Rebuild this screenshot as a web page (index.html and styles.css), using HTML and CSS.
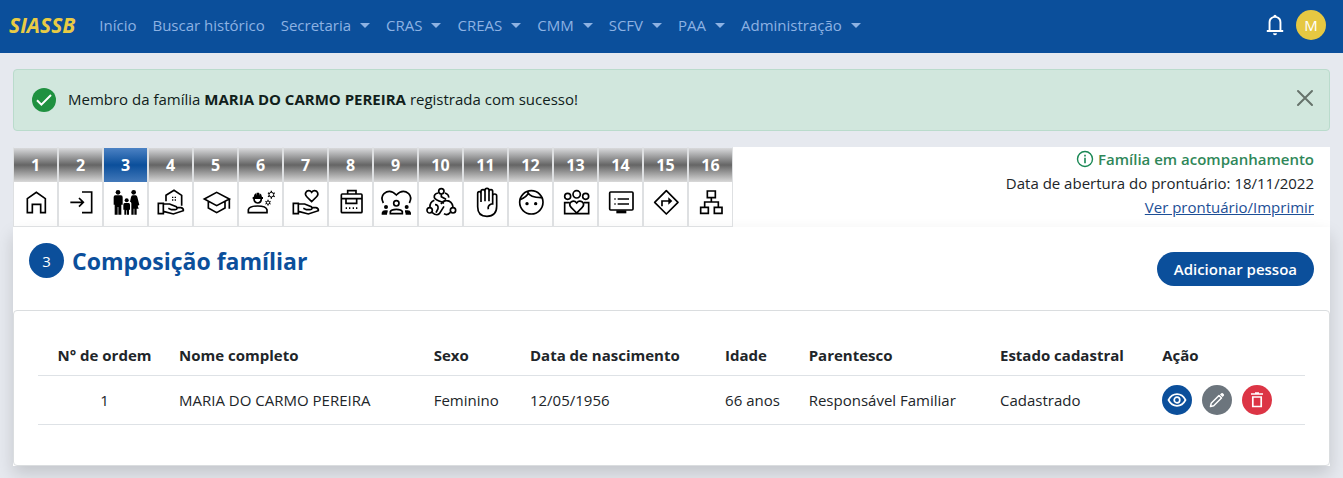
FILE: index.html
```html
<!DOCTYPE html>
<html lang="pt-BR">
<head>
<meta charset="utf-8">
<meta name="viewport" content="width=device-width, initial-scale=1">
<title>SIASSB - Composição famíliar</title>
<link rel="stylesheet" href="styles.css">
</head>
<body>
<header class="navbar">
  <a class="brand" href="#">SIASSB</a>
  <nav class="menu">
    <a class="menu-link" href="#">Início</a>
    <a class="menu-link" href="#">Buscar histórico</a>
    <button class="menu-link dropdown" type="button">Secretaria</button>
    <button class="menu-link dropdown" type="button">CRAS</button>
    <button class="menu-link dropdown" type="button">CREAS</button>
    <button class="menu-link dropdown" type="button">CMM</button>
    <button class="menu-link dropdown" type="button">SCFV</button>
    <button class="menu-link dropdown" type="button">PAA</button>
    <button class="menu-link dropdown" type="button">Administração</button>
  </nav>
  <button class="bell" type="button" aria-label="Notificações">
    <svg width="24" height="24" viewBox="0 0 24 24" fill="#fff"><path d="M12 1.700a1.600 1.600 0 0 1 1.600 1.500A6.200 6.200 0 0 1 18.400 9.300V17h1.800v1.900H3.800V17h1.800V9.300A6.200 6.200 0 0 1 10.400 3.200 1.600 1.600 0 0 1 12 1.700zM12 4.700a4.500 4.500 0 0 0-4.500 4.500V17h9V9.200A4.500 4.500 0 0 0 12 4.700zM10 20.200h4a2 2 0 0 1-4 0z"/></svg>
  </button>
  <button class="avatar" type="button">M</button>
</header>

<main class="page">
  <div class="alert" role="alert">
    <svg class="alert-icon" width="24" height="24" viewBox="0 0 24 24"><circle cx="12" cy="12" r="12" fill="#1f9140"/><path d="M5 12.300l4.400 4.400L19 7" fill="none" stroke="#fff" stroke-width="2"/></svg>
    <p class="alert-text">Membro da família <strong>MARIA DO CARMO PEREIRA</strong> registrada com sucesso!</p>
    <button class="close" type="button" aria-label="Fechar">
      <svg width="18" height="18" viewBox="0 0 18 18"><path d="M2 2l14 14M16 2L2 16" stroke="#66736b" stroke-width="2" stroke-linecap="round"/></svg>
    </button>
  </div>

  <section class="top">
    <nav class="steps" aria-label="Etapas">
      <a class="step" href="#"><span class="step-number">1</span><span class="step-icon"><svg viewBox="0 0 90 90"><path d="M19 74V32L46 13l27 19v42H59V49H34v25z"/></svg></span></a>
      <a class="step" href="#"><span class="step-number">2</span><span class="step-icon"><svg viewBox="0 0 90 90"><path d="M48 12h29v62H48M13 43h38M39 30l13 13-13 13"/></svg></span></a>
      <a class="step active" href="#"><span class="step-number">3</span><span class="step-icon"><svg viewBox="0 0 90 90"><g class="solid"><circle cx="21" cy="13" r="7"/><circle cx="68" cy="13" r="7"/><circle cx="47" cy="37" r="6"/><path d="M13 22h17q5 0 5 6v22h-4v30h-9V57h-2v23h-9V50H8V28q0-6 5-6zM41 45h12q4 0 4 5v15h-3v15h-6V67h-2v13h-6V65h-3V50q0-5 4-5zM62 22h12q4 0 5 5l6 24-5 2 3 9h-6v18h-7V62h-2v18h-7V46q0-4-4-5l3-13q1-6 5-6z"/></g></svg></span></a>
      <a class="step" href="#"><span class="step-number">4</span><span class="step-icon"><svg viewBox="0 0 90 90"><path d="M7 46h15v31H7zM22 48h19l20 8q6 8-4 9H46l-9-4M61 59h14q8 2 7 9L52 78l-30-8M30 40V22L54 7l23 15v31"/><path class="solid" d="M48 26h4v4h-4zM56 26h4v4h-4zM48 34h4v4h-4zM56 34h4v4h-4z"/></svg></span></a>
      <a class="step" href="#"><span class="step-number">5</span><span class="step-icon"><svg viewBox="0 0 90 90"><path d="M10 33l37-20 38 20-38 20zM22 40v20l25 14 25-14V40M85 33v29"/></svg></span></a>
      <a class="step" href="#"><span class="step-number">6</span><span class="step-icon"><svg viewBox="0 0 90 90"><path d="M7 74V65q3-11 28-11t28 11v9z"/><path d="M24 31q0 14 11 14t11-14"/><path class="solid" d="M20 27h3q1-9 7-11v7l2-9h7l2 9v-7q6 2 7 11h3v6H20z"/><circle cx="76" cy="20" r="7" stroke-width="3"/><path d="M76 8v5M76 27v5M66 14l4 3M82 23l4 3M86 14l-4 3M70 23l-4 3" stroke-width="4"/><circle cx="66" cy="44" r="5" stroke-width="3"/><path d="M66 35v4M66 49v4M58 40l4 2M70 46l4 2M74 40l-4 2M62 46l-4 2" stroke-width="3"/></svg></span></a>
      <a class="step" href="#"><span class="step-number">7</span><span class="step-icon"><svg viewBox="0 0 90 90"><path d="M7 46h15v31H7zM22 48h19l20 8q6 8-4 9H46l-9-4M61 59h14q8 2 7 9L52 78l-30-8M62 41L48 27q-9-9-1-17 9-5 15 3 6-8 15-3 8 8-1 17z"/></svg></span></a>
      <a class="step" href="#"><span class="step-number">8</span><span class="step-icon"><svg viewBox="0 0 90 90"><rect x="16" y="18" width="62" height="56" rx="3"/><path d="M35 18V8h25v10M16 32h62M30 32v14h32V32"/><path class="solid" d="M29 58h4v5h-4zM39 58h4v5h-4zM50 58h4v5h-4zM60 58h4v5h-4z"/></svg></span></a>
      <a class="step" href="#"><span class="step-number">9</span><span class="step-icon"><svg viewBox="0 0 90 90"><path d="M7 45Q-2 28 9 17 27 2 46 21 65 2 83 17q11 11 2 28"/><circle cx="46" cy="46" r="8"/><path d="M28 77v-6q3-7 18-7t18 7v6z"/><g class="solid"><circle cx="15" cy="57" r="6"/><circle cx="77" cy="57" r="6"/><path d="M2 80v-6q2-7 10-7h8v5q-2 2-2 8zM90 80v-6q-2-7-10-7h-8v5q2 2 2 8z"/></g></svg></span></a>
      <a class="step" href="#"><span class="step-number">10</span><span class="step-icon"><svg viewBox="0 0 90 90"><circle cx="46" cy="10" r="8"/><circle cx="11" cy="67" r="8"/><circle cx="81" cy="67" r="8"/><path d="M36 15q-13 3-11 14 3 7 23 13l6 4M46 18v8l14 8M57 15q12 4 11 14M12 57q-1-14 13-20M27 50q11 0 9 12l-6 12M18 73q14 12 22 4l14-22M45 48q6-11 17-10 16 1 19 19M73 73q-10 11-19 4"/></svg></span></a>
      <a class="step" href="#"><span class="step-number">11</span><span class="step-icon"><svg viewBox="0 0 90 90"><path d="M30 42V17q0-6-5-6t-5 6v39q0 29 28 29 29 0 29-30V24q0-6-6-6t-6 6v24h-4q-12 5-9 16M30 42V11q0-6 6-6t6 6v29M42 40V7q0-6 6-6t6 6v33M54 40V11q0-6 6-6 5 0 5 6v37"/></svg></span></a>
      <a class="step" href="#"><span class="step-number">12</span><span class="step-icon"><svg viewBox="0 0 90 90"><circle cx="46" cy="43" r="35"/><path d="M34 11q8 19 45 18M12 35Q32 28 38 14"/><g class="solid"><circle cx="33" cy="47" r="5"/><circle cx="59" cy="47" r="5"/></g></svg></span></a>
      <a class="step" href="#"><span class="step-number">13</span><span class="step-icon"><svg viewBox="0 0 90 90"><circle cx="20" cy="25" r="9"/><circle cx="74" cy="25" r="9"/><circle cx="47" cy="19" r="11"/><path d="M26 44H11v33h72V44H68M47 75L31 59q-9-9-1-17 10-6 17 3 7-9 17-3 8 8-1 17z"/></svg></span></a>
      <a class="step" href="#"><span class="step-number">14</span><span class="step-icon"><svg viewBox="0 0 90 90"><rect x="11" y="12" width="70" height="54" rx="3"/><path d="M35 33h34M35 48h34M25 33h4M25 48h4"/><path class="solid" d="M31 67h30v9H31z"/></svg></span></a>
      <a class="step" href="#"><span class="step-number">15</span><span class="step-icon"><svg viewBox="0 0 90 90"><path d="M46 8l35 35-35 35-35-35z" stroke-linejoin="round"/><path d="M33 55V39h24"/><path class="solid" d="M52 28l12 11-12 11z"/></svg></span></a>
      <a class="step" href="#"><span class="step-number">16</span><span class="step-icon"><svg viewBox="0 0 90 90"><path d="M34 9h24v20H34zM14 58h23v18H14zM55 58h23v18H55zM46 29v13M26 58V42h41v16"/></svg></span></a>
    </nav>
    <div class="summary">
      <p class="status"><svg width="18" height="18" viewBox="0 0 18 18"><circle cx="9" cy="9" r="7.500" fill="none" stroke="#198754" stroke-width="1.400"/><path d="M8.200 4.700h1.600v1.700H8.200zM8.200 7.800h1.600v5.400H8.200z" fill="#198754"/></svg>Família em acompanhamento</p>
      <p>Data de abertura do prontuário: 18/11/2022</p>
      <p><a class="print" href="#">Ver prontuário/Imprimir</a></p>
    </div>
  </section>

  <section class="panel">
    <div class="panel-head">
      <span class="badge">3</span>
      <h1 class="title">Composição famíliar</h1>
      <button class="add" type="button">Adicionar pessoa</button>
    </div>
    <div class="card">
      <table class="people">
        <colgroup><col class="c-order"><col class="c-name"><col class="c-sex"><col class="c-birth"><col class="c-age"><col class="c-kin"><col class="c-state"><col class="c-action"></colgroup>
        <thead>
          <tr><th class="center">N° de ordem</th><th>Nome completo</th><th>Sexo</th><th>Data de nascimento</th><th>Idade</th><th>Parentesco</th><th>Estado cadastral</th><th>Ação</th></tr>
        </thead>
        <tbody>
          <tr>
            <td class="center">1</td><td>MARIA DO CARMO PEREIRA</td><td>Feminino</td><td>12/05/1956</td><td>66 anos</td><td>Responsável Familiar</td><td>Cadastrado</td>
            <td>
              <div class="actions">
                <button class="action view" type="button" aria-label="Visualizar"><svg width="20" height="20" viewBox="0 0 20 20" fill="none" stroke="#fff" stroke-width="1.700"><path d="M1.500 10Q4.500 4.200 10 4.200T18.500 10Q15.500 15.800 10 15.800T1.500 10z"/><circle cx="10" cy="10" r="2.800"/></svg></button>
                <button class="action edit" type="button" aria-label="Editar"><svg width="20" height="20" viewBox="0 0 20 20"><path d="M3.500 16.500l.7-3.200L12 5.500l2.500 2.500-7.800 7.800z" fill="none" stroke="#fff" stroke-width="1.500" stroke-linejoin="round"/><path d="M13 4.500l1.300-1.300q.8-.6 1.600.1l.9.900q.7.800 0 1.600L15.500 7z" fill="#fff"/></svg></button>
                <button class="action remove" type="button" aria-label="Excluir"><svg width="20" height="20" viewBox="0 0 20 20"><path d="M4 4h12M8 3h4M5.800 7h8.400v9.500H5.800z" fill="none" stroke="#fff" stroke-width="1.700"/></svg></button>
              </div>
            </td>
          </tr>
        </tbody>
      </table>
    </div>
  </section>
</main>
</body>
</html>
```
FILE: styles.css
```css
* { box-sizing: border-box; }
body {
  margin: 0;
  background: #e6e9ef;
  color: #212529;
  font: 15px/24px "Segoe UI", "Open Sans", "Noto Sans", sans-serif;
}
p, h1 { margin: 0; }
button { font: inherit; border: 0; padding: 0; background: none; cursor: pointer; }
svg { display: block; }

.navbar {
  display: flex;
  align-items: center;
  min-height: 53px;
  padding: 0 17px 3px 9px;
  background: #0b4f9b;
}
.brand {
  margin-right: 24px;
  color: #e9cb45;
  font-size: 21px;
  font-weight: 700;
  font-style: italic;
  text-decoration: none;
}
.menu { display: flex; flex: 1; gap: 16px; }
.menu-link { color: #8db2e3; text-decoration: none; white-space: nowrap; }
.dropdown { display: flex; align-items: center; gap: 9px; }
.dropdown::after {
  content: "";
  border: 5px solid transparent;
  border-top-color: currentColor;
  border-bottom: 0;
}
.bell { margin-right: 9px; }
.avatar { width: 30px; height: 30px; border-radius: 50%; background: #e6c842; color: #fff; }

.page { padding: 16px 13px; }
.alert {
  display: flex;
  align-items: center;
  min-height: 62px;
  padding: 0 15px 0 18px;
  border: 1px solid #badbcc;
  border-radius: 4px;
  background: #d1e7dd;
}
.alert-text { flex: 1; margin-left: 12px; padding-bottom: 3px; color: #10201a; }
.close { padding-bottom: 4px; }

.top {
  display: flex;
  justify-content: space-between;
  margin-top: 16px;
  background: #fff;
}
.steps { display: flex; }
.step {
  display: flex;
  flex-direction: column;
  width: 45px;
  border: 1px solid #dee0e2;
  border-top-color: #e6e9ef;
  color: #000;
  text-decoration: none;
}
.step-number {
  height: 34px;
  background: linear-gradient(#d9dadc, #656565 50%, #d9d9d9);
  color: #fff;
  font-size: 16px;
  font-weight: 700;
  line-height: 35px;
  text-align: center;
}
.active .step-number { background: linear-gradient(#4c82c4, #0b4f9b 50%, #4379ba); }
.step-icon { display: flex; justify-content: center; height: 44px; padding-top: 6px; }
.step-icon svg {
  width: 30px;
  height: 30px;
  overflow: visible;
  fill: none;
  stroke: #000;
  stroke-width: 5;
}
.step-icon .solid { fill: #000; stroke: none; }

.summary { padding: 0 16px; text-align: right; }
.status {
  display: flex;
  justify-content: flex-end;
  align-items: center;
  gap: 4px;
  color: #2f8759;
  font-weight: 600;
}
.print { color: #1d4f96; }

.panel { background: #fff; box-shadow: 0 8px 16px rgba(0, 0, 0, .15); }
.panel-head { display: flex; min-height: 83px; padding: 16px; }
.badge {
  width: 35px;
  height: 35px;
  border-radius: 50%;
  background: #0b4f9b;
  color: #fff;
  line-height: 36px;
  text-align: center;
}
.title {
  flex: 1;
  margin-left: 8px;
  color: #0b4f9b;
  font-size: 23px;
  font-weight: 700;
  line-height: 36px;
}
.add {
  align-self: flex-end;
  height: 34px;
  margin-bottom: 8px;
  padding: 0 17px;
  border-radius: 17px;
  background: #0b4f9b;
  color: #fff;
  font-weight: 600;
}
.card { padding: 24px 24px 40px; border: 1px solid #dadddf; border-radius: 4px; }
.people { width: 100%; border-collapse: collapse; table-layout: fixed; }
.people th, .people td {
  padding: 8px;
  border-bottom: 1px solid #dee2e6;
  text-align: left;
  white-space: nowrap;
}
.people td { padding: 9px 8px; }
.people th { font-weight: 700; }
.people .center { text-align: center; }
.c-order { width: 10.5%; }
.c-name { width: 20.1%; }
.c-sex { width: 7.6%; }
.c-birth { width: 15.4%; }
.c-age { width: 6.6%; }
.c-kin { width: 15.1%; }
.c-state { width: 12.8%; }
.c-action { width: 11.9%; }
.actions { display: flex; gap: 10px; }
.action {
  display: flex;
  align-items: center;
  justify-content: center;
  width: 30px;
  height: 30px;
  border-radius: 50%;
}
.view { background: #0b4f9b; }
.edit { background: #6c757d; }
.remove { background: #dc3545; }
```
